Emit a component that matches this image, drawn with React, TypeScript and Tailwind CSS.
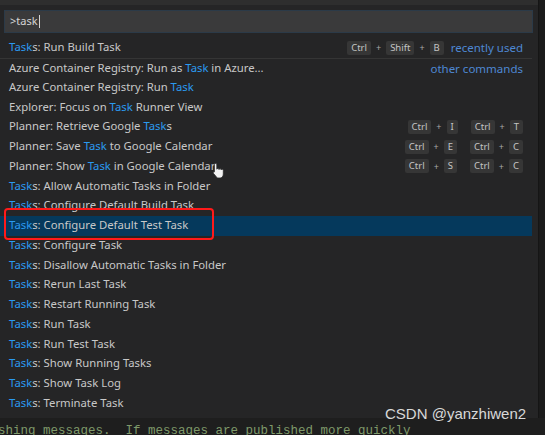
import { FC } from 'react'

interface Cmd {
  parts: [string, boolean][]
  keys?: string[][]
  note?: string
  noteTop?: boolean
  selected?: boolean
}

const t = (s: string): [string, boolean] => [s, false]
const h = (s: string): [string, boolean] => [s, true]
const tasks = (rest: string): Cmd => ({ parts: [h('Task'), t('s: ' + rest)] })

const commands: Cmd[] = [
  {
    parts: [h('Task'), t('s: Run Build Task')],
    keys: [['Ctrl', 'Shift', 'B']],
    note: 'recently used',
  },
  {
    parts: [t('Azure Container Registry: Run as '), h('Task'), t(' in Azure...')],
    note: 'other commands',
    noteTop: true,
  },
  { parts: [t('Azure Container Registry: Run '), h('Task')] },
  { parts: [t('Explorer: Focus on '), h('Task'), t(' Runner View')] },
  {
    parts: [t('Planner: Retrieve Google '), h('Task'), t('s')],
    keys: [
      ['Ctrl', 'I'],
      ['Ctrl', 'T'],
    ],
  },
  {
    parts: [t('Planner: Save '), h('Task'), t(' to Google Calendar')],
    keys: [
      ['Ctrl', 'E'],
      ['Ctrl', 'C'],
    ],
  },
  {
    parts: [t('Planner: Show '), h('Task'), t(' in Google Calendar')],
    keys: [
      ['Ctrl', 'S'],
      ['Ctrl', 'C'],
    ],
  },
  tasks('Allow Automatic Tasks in Folder'),
  tasks('Configure Default Build Task'),
  { ...tasks('Configure Default Test Task'), selected: true },
  tasks('Configure Task'),
  tasks('Disallow Automatic Tasks in Folder'),
  tasks('Rerun Last Task'),
  tasks('Restart Running Task'),
  tasks('Run Task'),
  tasks('Run Test Task'),
  tasks('Show Running Tasks'),
  tasks('Show Task Log'),
  tasks('Terminate Task'),
]

const Keys: FC<{ combo: string[] }> = ({ combo }) => (
  <div className="flex items-center gap-[5px]">
    {combo.map((k, i) => (
      <div key={i} className="flex items-center gap-[5px]">
        {i > 0 && <span className="text-[9px] text-[#a8a8a8]">+</span>}
        <span className="h-[14px] px-[4px] flex items-center bg-[#363636] rounded-[2px] text-[9.5px] text-[#c4c4c4]">
          {k}
        </span>
      </div>
    ))}
  </div>
)

// pointer hand drawn over the Google Calendar row
const HandCursor: FC = () => (
  <svg
    width="14"
    height="17"
    viewBox="0 0 14 17"
    className="absolute left-[212px] top-[124px]"
  >
    <path
      d="M3.6 1.5C4.3 1.5 4.8 2 4.8 2.7V7.2C5 6.7 5.4 6.4 5.9 6.4C6.5 6.4 7 6.9 7 7.5C7.2 7 7.6 6.7 8.1 6.7C8.7 6.7 9.2 7.2 9.2 7.8C9.4 7.4 9.8 7.2 10.2 7.2C10.8 7.2 11.3 7.7 11.3 8.3V12C11.3 14 10.1 15.6 8.3 16H5.3L1.6 11.6C1 10.9 1.2 10 2 9.8C2.2 9.75 2.3 9.8 2.4 9.9V2.7C2.4 2 2.9 1.5 3.6 1.5Z"
      fill="#f2f2f2"
      stroke="#2a2a2a"
      strokeWidth="0.8"
    />
  </svg>
)

export default function App() {
  return (
    <div
      className="w-[545px] h-[435px] bg-[#1e1e1e] relative overflow-hidden flex flex-col"
      style={{ fontFamily: '"Noto Sans", "Open Sans", sans-serif' }}
    >
      <div className="flex h-[418px] shrink-0">
        <div className="w-[539px] h-full bg-[#252526] border-r border-[#151515] flex flex-col">
          <div className="h-[5px] bg-[#2e2e2e]" />
          <div className="px-[4px] pt-[5px] pb-[5px] pr-[5px]">
            <div className="h-[23px] bg-[#3a3a3b] border border-[#2b3a48] flex items-center pl-[5px] text-[11px] text-[#d4d4d4]">
              &gt;task<span className="w-px h-[13px] bg-[#d4d4d4] ml-[1px]" />
            </div>
          </div>
          <div className="w-[532px] flex flex-col relative">
            {commands.map((c, i) => (
              <div
                key={i}
                className={`h-[19.75px] shrink-0 flex items-center pl-[9px] pr-[9px] text-[11.3px] ${
                  c.selected ? 'bg-[#05395c]' : ''
                } ${c.noteTop ? 'border-t border-[#353535]' : ''}`}
              >
                <span className="text-[#c8c8c8] whitespace-pre">
                  {c.parts.map(([s, hl], j) => (
                    <span key={j} className={hl ? 'text-[#2b9af0]' : ''}>
                      {s}
                    </span>
                  ))}
                </span>
                <div className="ml-auto flex items-center gap-[13px]">
                  {c.keys?.map((k, j) => <Keys key={j} combo={k} />)}
                  {c.note && (
                    <span
                      className={`text-[11.5px] text-[#4e88d4] ${c.keys ? '-ml-[6px]' : ''}`}
                    >
                      {c.note}
                    </span>
                  )}
                </div>
              </div>
            ))}
            <HandCursor />
          </div>
        </div>
        <div className="flex-1 bg-[#1b1b1b]" />
      </div>
      <div className="h-[2px] bg-[#111]" />
      <div
        className="-ml-[2px] text-[12.5px] leading-[15px] text-[#7f9a6a] whitespace-pre pt-[6px]"
        style={{ fontFamily: '"Liberation Mono", monospace' }}
      >
        shing messages.  If messages are published more quickly
      </div>
      <div
        className="absolute left-[385px] top-[405px] text-[15px] leading-[18px] text-[#d8d8d8]"
        style={{ fontFamily: '"Liberation Sans", Arial, sans-serif' }}
      >
        CSDN @yanzhiwen2
      </div>
      <div className="absolute left-[4px] top-[208px] w-[210px] h-[32px] border-[2.5px] border-[#ff1a1a] rounded-[4px]" />
    </div>
  )
}
